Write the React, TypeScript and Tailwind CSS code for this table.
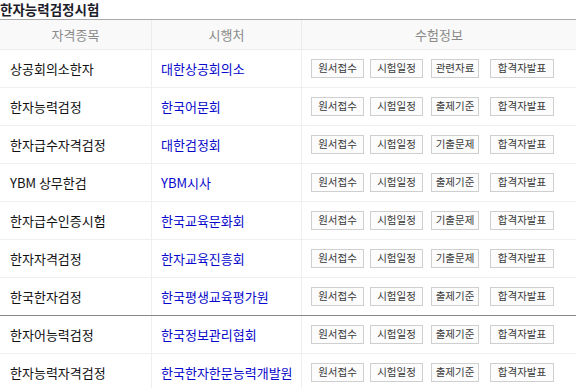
import React from 'react'

interface ExamRow {
  name: string
  org: string
  third: string
}

const rows: ExamRow[] = [
  { name: '상공회의소한자', org: '대한상공회의소', third: '관련자료' },
  { name: '한자능력검정', org: '한국어문회', third: '출제기준' },
  { name: '한자급수자격검정', org: '대한검정회', third: '기출문제' },
  { name: 'YBM 상무한검', org: 'YBM시사', third: '출제기준' },
  { name: '한자급수인증시험', org: '한국교육문화회', third: '기출문제' },
  { name: '한자자격검정', org: '한자교육진흥회', third: '기출문제' },
  { name: '한국한자검정', org: '한국평생교육평가원', third: '출제기준' },
  { name: '한자어능력검정', org: '한국정보관리협회', third: '출제기준' },
  { name: '한자능력자격검정', org: '한국한자한문능력개발원', third: '출제기준' },
]

const btn =
  'flex h-[19px] items-center justify-center border border-[#cfcfcf] bg-[#fcfcfc] text-[10.5px] leading-none text-[#3a3a3a]'

function InfoButtons({ third }: { third: string }) {
  return (
    <div className="flex items-center pl-[9px]">
      <span className={`${btn} w-[53px]`}>원서접수</span>
      <span className={`${btn} ml-[6px] w-[53px]`}>시험일정</span>
      <span className={`${btn} ml-[8px] w-[48px]`}>{third}</span>
      <span className={`${btn} ml-[11px] w-[64px]`}>합격자발표</span>
    </div>
  )
}

export default function App() {
  return (
    <div
      className="w-[576px] h-[388px] overflow-hidden bg-white"
      style={{ fontFamily: '"Noto Sans CJK KR", "Noto Sans", sans-serif' }}
    >
      <h2 className="h-[19px] pt-[1px] text-[13.5px] font-bold leading-[17px] text-[#1c1c2a]">
        한자능력검정시험
      </h2>

      <div className="border-t border-[#aaaaaa]">
        {/* header */}
        <div className="flex h-[30px] border-b border-[#ececec] bg-[#f9f9f9] text-[13px] text-[#8a8a8a]">
          <div className="flex w-[152px] items-center justify-center border-r border-[#ececec]">자격종목</div>
          <div className="flex w-[150px] items-center justify-center border-r border-[#ececec]">시행처</div>
          <div className="flex flex-1 items-center justify-center">수험정보</div>
        </div>

        {rows.map((row, i) => (
          <div
            key={row.name}
            className={`flex h-[38px] border-b text-[13px] ${i === 6 ? 'border-[#888888]' : 'border-[#efefef]'}`}
          >
            <div className="flex w-[152px] items-center border-r border-[#efefef] pl-[10px] text-[#111]">
              {row.name}
            </div>
            <div className="flex w-[150px] items-center border-r border-[#efefef] pl-[9px] text-[#0707cc]">
              {row.org}
            </div>
            <div className="flex flex-1 items-center">
              <InfoButtons third={row.third} />
            </div>
          </div>
        ))}
      </div>
    </div>
  )
}
